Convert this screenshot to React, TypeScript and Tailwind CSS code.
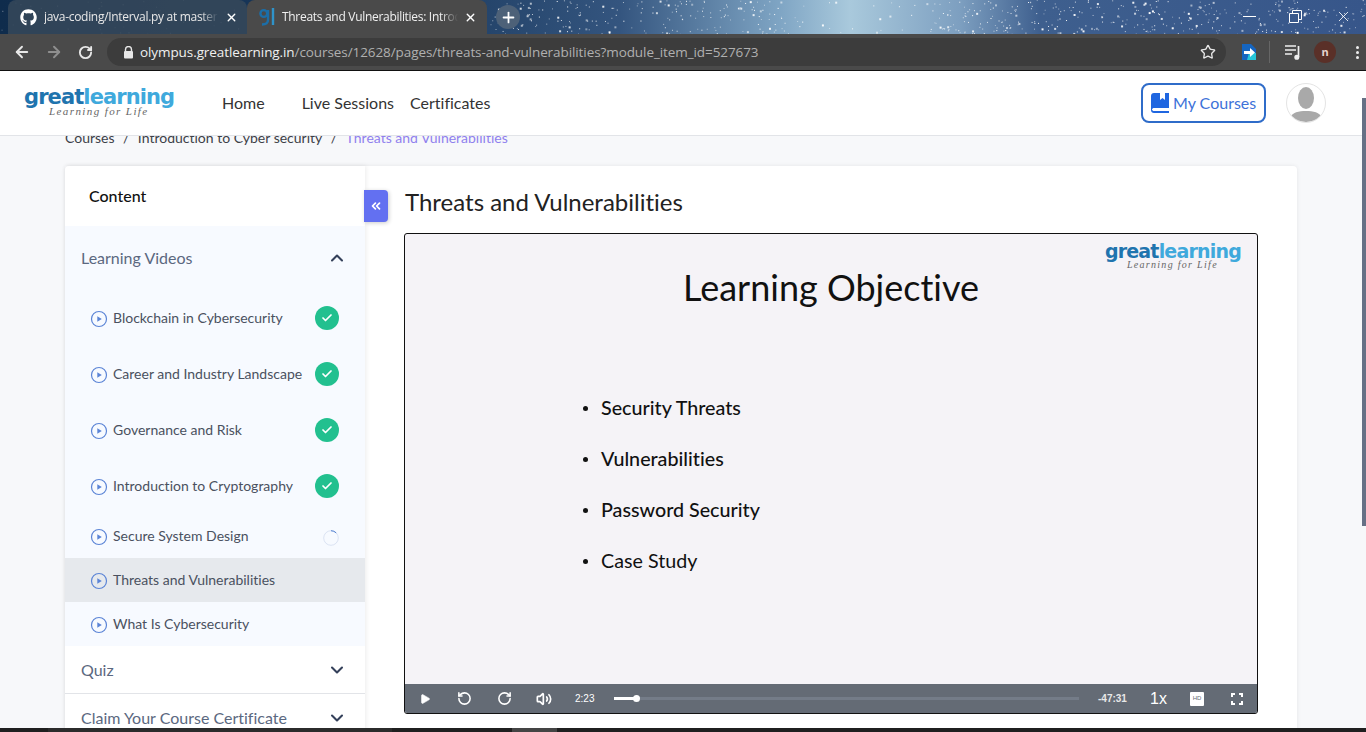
import { ArrowLeft, ArrowRight, ChevronDown, ChevronUp, ChevronsLeft, Check, Play, Plus, RotateCcw, RotateCw, Star, Volume2, X } from 'lucide-react';
import { FaGithub } from 'react-icons/fa';

const lessons = [
  { name: 'Blockchain in Cybersecurity', status: 'done' },
  { name: 'Career and Industry Landscape', status: 'done' },
  { name: 'Governance and Risk', status: 'done' },
  { name: 'Introduction to Cryptography', status: 'done' },
  { name: 'Secure System Design', status: 'progress' },
  { name: 'Threats and Vulnerabilities', status: 'active' },
  { name: 'What Is Cybersecurity', status: 'none' },
];

const bullets = ['Security Threats', 'Vulnerabilities', 'Password Security', 'Case Study'];

// simple seeded random so the star field is the same on each render
function makeStars() {
  const stars: { x: number; y: number; o: number; s: number }[] = [];
  let seed = 1234;
  const next = () => {
    seed = (seed * 16807) % 2147483647;
    return seed / 2147483647;
  };
  for (let i = 0; i < 60; i++) {
    stars.push({ x: next() * 240, y: next() * 34, o: 0.3 + next() * 0.4, s: 1 });
  }
  for (let i = 0; i < 700; i++) {
    const x = 490 + next() * 876;
    if (x > 790 && x < 930 && next() > 0.15) continue;
    stars.push({ x, y: next() * 34, o: 0.4 + next() * 0.6, s: next() > 0.85 ? 2 : 1 });
  }
  return stars;
}

const stars = makeStars();

function GlFavicon() {
  return (
    <svg width="16" height="20" viewBox="0 0 16 20" fill="none" className="shrink-0">
      <circle cx="4.800" cy="6.500" r="3.400" stroke="#1b6ea8" strokeWidth="2.400" />
      <path d="M9 3v10c0 3-2 4.500-6 4.500" stroke="#1b6ea8" strokeWidth="2.400" />
      <path d="M14 1v17" stroke="#2f93c9" strokeWidth="2.400" />
    </svg>
  );
}

function Logo({ small }: { small?: boolean }) {
  return (
    <div className="w-fit flex flex-col leading-none">
      <div className={small ? "font-['DejaVu_Sans'] font-bold text-[19px] tracking-[-0.8px] leading-[17px]" : "font-['DejaVu_Sans'] font-bold text-[21px] tracking-[-0.9px] leading-[18px]"}>
        <span className="text-[#1f74ae]">great</span>
        <span className="text-[#3fa9dc]">learning</span>
      </div>
      <div className={small ? "font-['Liberation_Serif'] italic text-[10px] tracking-[1.3px] text-[#666] pl-[22px]" : "font-['Liberation_Serif'] italic text-[11px] tracking-[1.4px] text-[#666] pl-[25px]"}>
        Learning for Life
      </div>
    </div>
  );
}

function PlayCircle() {
  return (
    <svg width="18" height="18" viewBox="0 0 18 18" fill="none" className="shrink-0 mt-[2px]">
      <circle cx="9" cy="9" r="7.500" stroke="#5b84d6" strokeWidth="1.200" />
      <path d="M7.300 6.200v5.600L11.800 9z" fill="#5b84d6" />
    </svg>
  );
}

function LessonRow({ name, status }: { name: string; status: string }) {
  const done = status === 'done';
  return (
    <div className={`flex items-center pl-[25px] pr-[26px] ${done ? 'h-14' : 'h-11'} ${status === 'active' ? 'bg-[#e6e9ed]' : ''}`}>
      <PlayCircle />
      <span className="ml-[5px] flex-1 text-sm text-[#4a5160] whitespace-nowrap">{name}</span>
      {done && (
        <span className="w-6 h-6 rounded-full bg-[#22c08f] flex items-center justify-center">
          <Check size={12} strokeWidth={3.5} className="text-white" />
        </span>
      )}
      {status === 'progress' && (
        <svg width="16" height="16" viewBox="0 0 16 16" fill="none" className="mt-[3px]">
          <circle cx="8" cy="8" r="7.300" stroke="#dbe3f3" strokeWidth="1" />
          <path d="M8 .7A7.300 7.300 0 0 1 13.200 2.900" stroke="#4f7fd0" strokeWidth="1" />
        </svg>
      )}
    </div>
  );
}

export default function App() {
  return (
    <div className="relative h-[732px] w-[1366px] overflow-hidden flex flex-col bg-[#f7f8fa] font-['Lato',sans-serif] [font-variant-ligatures:none]">
      {/* browser chrome */}
      <div className="relative h-[34px] shrink-0 flex items-end overflow-hidden bg-[linear-gradient(90deg,#0f2c4c_0px,#1b3a5e_400px,#34557f_620px,#7fa5c4_780px,#a9c9dc_850px,#7d9fc0_960px,#3e5f8e_1040px,#37568a_1366px)]">
        <svg className="absolute inset-0" width="1366" height="34">
          {stars.map((s, i) => (
            <rect key={i} x={s.x} y={s.y} width={s.s} height={s.s} fill="#fff" opacity={s.o} />
          ))}
        </svg>
        <div className="relative ml-2 h-[34px] w-[239px] rounded-t-lg bg-[#34475a]/90 flex items-center pl-3 text-[#e8e8e8]">
          <FaGithub size={17} className="text-white shrink-0" />
          <span className="ml-[7px] w-[174px] overflow-hidden whitespace-nowrap text-[12px] tracking-[-0.3px] font-['Open_Sans'] [mask-image:linear-gradient(90deg,#000_90%,transparent)]">java-coding/Interval.py at master</span>
          <X size={13} strokeWidth={2.500} className="ml-[7px] text-white" />
        </div>
        <div className="relative h-[34px] w-[240px] rounded-t-lg bg-[#4a4a4a] flex items-center pl-3 text-[#f0f0f0]">
          <GlFavicon />
          <span className="ml-[7px] w-[176px] overflow-hidden whitespace-nowrap text-[12px] tracking-[-0.3px] font-['Open_Sans'] [mask-image:linear-gradient(90deg,#000_90%,transparent)]">Threats and Vulnerabilities: Introduction</span>
          <X size={13} strokeWidth={2.500} className="ml-[6px] text-white" />
        </div>
        <div className="relative ml-[9px] mb-[5px] w-6 h-6 rounded-full bg-[#4d6178] flex items-center justify-center">
          <Plus size={17} strokeWidth={2.500} className="text-white" />
        </div>
        <div className="relative ml-auto mb-[9px] mr-[14px] flex items-center gap-[33px] text-white">
          <span className="w-[13px] h-px bg-white" />
          <svg width="13" height="13" viewBox="0 0 13 13" fill="none" stroke="#fff">
            <path d="M.5 3.500h9v9h-9zM3.500 3.500v-3h9v9h-3" />
          </svg>
          <X size={17} strokeWidth={1.200} />
        </div>
      </div>

      <div className="h-[37px] shrink-0 bg-[#4a4a4a] border-b border-[#111] flex items-center pl-[13px] text-[#e8e8e8]">
        <ArrowLeft size={18} strokeWidth={2.500} />
        <ArrowRight size={18} strokeWidth={2.500} className="ml-[14px] text-[#8f8f8f]" />
        <RotateCw size={15} strokeWidth={3} className="ml-[15px]" />
        <div className="ml-[14px] h-[28px] w-[1119px] rounded-full bg-[#3c3c3c] flex items-center pl-[16px] pr-[10px]">
          <svg width="11" height="13" viewBox="0 0 11 13" className="shrink-0">
            <path d="M2.500 5V3.500a3 3 0 0 1 6 0V5" fill="none" stroke="#e8e8e8" strokeWidth="1.400" />
            <rect x="1" y="5" width="9" height="7.500" rx="1" fill="#e8e8e8" />
          </svg>
          <span className="ml-[6px] text-[13.5px] tracking-[-0.085px] font-['Open_Sans'] whitespace-nowrap flex-1">
            <span className="text-[#f0f0f0]">olympus.greatlearning.in</span>
            <span className="text-[#b0b0b0]">/courses/12628/pages/threats-and-vulnerabilities?module_item_id=527673</span>
          </span>
          <Star size={16} strokeWidth={2} />
        </div>
        <svg width="16" height="18" viewBox="0 0 16 18" className="ml-[15px]">
          <path d="M1 1h9l5 5v11H1z" fill="#1565c0" />
          <path d="M8 10h7v7H6z" fill="#26c6da" />
          <path d="M3 8h6V5l5 4.500-5 4.500v-3H3z" fill="#fff" />
        </svg>
        <span className="ml-[12px] w-px h-[22px] bg-[#666]" />
        <svg width="18" height="16" viewBox="0 0 18 16" fill="none" stroke="#eee" strokeWidth="1.700" className="ml-[14px]">
          <path d="M1 2h11M1 6h11M1 10h7" />
          <path d="M14.500 2v11" />
          <circle cx="12.800" cy="13.300" r="1.700" fill="#eee" />
        </svg>
        <span className="ml-[12px] w-[22px] h-[22px] rounded-full bg-[#5a3028] flex items-center justify-center text-[11px] font-bold text-[#e8d5d0] font-['Open_Sans']">n</span>
        <span className="ml-[20px] flex flex-col gap-[2px]">
          <span className="w-[3px] h-[3px] rounded-full bg-[#eee]" />
          <span className="w-[3px] h-[3px] rounded-full bg-[#eee]" />
          <span className="w-[3px] h-[3px] rounded-full bg-[#eee]" />
        </span>
      </div>

      {/* site header */}
      <header className="relative z-10 h-[65px] shrink-0 bg-white border-b border-[#e2e4e8] flex items-center pl-6 pr-10">
        <div className="w-[198px] -mt-[2px]">
          <Logo />
        </div>
        <nav className="flex items-center text-base text-[#333]">
          <span>Home</span>
          <span className="ml-[37px]">Live Sessions</span>
          <span className="ml-4">Certificates</span>
        </nav>
        <button className="ml-auto w-[125px] h-10 border-2 border-[#2f6cc9] rounded-lg flex items-center pl-2 text-base text-[#3d72d9]">
          <svg width="18" height="20" viewBox="0 0 18 20" className="shrink-0">
            <path d="M3 0h15v15H3.200C2 15 1 15.600 1 16.500S2 18 3.200 18H18v2H3c-1.800 0-3-1.200-3-3V3c0-1.800 1.200-3 3-3z" fill="#1f66e0" />
            <path d="M9 0h5v7l-2.500-2L9 7z" fill="#fff" />
          </svg>
          <span className="ml-[4px]">My Courses</span>
        </button>
        <div className="ml-5 w-10 h-10 rounded-full border border-[#e4e4e4] overflow-hidden bg-white">
          <svg width="38" height="38" viewBox="0 0 38 38">
            <ellipse cx="19" cy="14" rx="8" ry="11" fill="#a9a9a9" />
            <path d="M3 34c2-6 9-7 16-7s14 1 16 7c-4 3-10 4-16 4S7 37 3 34z" fill="#a9a9a9" />
          </svg>
        </div>
      </header>

      {/* page */}
      <div className="flex-1 min-h-0 relative pl-[65px] pr-[69px]">
        <div className="-mt-[7px] h-[17px] flex items-center text-sm leading-[17px] text-[#3c4047] whitespace-nowrap">
          <span>Courses</span>
          <span className="mx-[8.500px]">/</span>
          <span>Introduction to Cyber security</span>
          <span className="mx-[8.500px]">/</span>
          <span className="text-[#8f80ee]">Threats and Vulnerabilities</span>
        </div>
        <div className="mt-5 h-[600px] bg-white rounded-t flex shadow-[0_0_4px_rgba(0,0,0,0.08)]">
          <aside className="relative w-[300px] shrink-0 shadow-[1px_0_5px_rgba(0,0,0,0.08)]">
            <div className="h-[60px] flex items-center pl-6 text-base font-medium text-[#111]">Content</div>
            <div className="bg-[#f7faff]">
              <div className="h-[65px] flex items-center justify-between pl-4 pr-[18px] pb-[2px] text-base text-[#5b6880]">
                <span>Learning Videos</span>
                <ChevronUp size={20} strokeWidth={2.500} className="text-[#34405a]" />
              </div>
              <div className="-mt-px">
                {lessons.map((l) => (
                  <LessonRow key={l.name} name={l.name} status={l.status} />
                ))}
              </div>
            </div>
            <div className="h-12 border-b border-[#e2e4e8] flex items-center justify-between pl-4 pr-[18px] text-base text-[#5b6880]">
              <span>Quiz</span>
              <ChevronDown size={20} strokeWidth={2.500} className="text-[#34405a]" />
            </div>
            <div className="h-12 flex items-center justify-between pl-4 pr-[18px] text-base text-[#5b6880]">
              <span>Claim Your Course Certificate</span>
              <ChevronDown size={20} strokeWidth={2.500} className="text-[#34405a]" />
            </div>
            <div className="absolute left-[299px] top-6 w-6 h-8 bg-[#6370f1] rounded-r flex items-center justify-center shadow-[1px_1px_4px_rgba(0,0,0,0.2)]">
              <ChevronsLeft size={14} strokeWidth={3} className="text-white" />
            </div>
          </aside>

          <main className="flex-1 pl-[39px] pr-[39px] pt-[19px]">
            <h1 className="h-[34px] text-2xl leading-[34px] text-[#222] pl-px">Threats and Vulnerabilities</h1>
            <div className="relative mt-[14px] h-[481px] rounded-[3px] border border-[#111] overflow-hidden flex flex-col bg-[#f5f3f7]">
              <div className="absolute right-[16px] top-[9px]">
                <Logo small />
              </div>
              <div className="flex-1 min-h-0">
                <div className="pt-[28px] text-center text-[36px] leading-[50px] text-[#111]">Learning Objective</div>
                <ul className="mt-[81px] pl-[177px] flex flex-col gap-[21px]">
                  {bullets.map((b, i) => (
                    <li key={b} className={`flex items-center h-[30px] text-[19.700px] text-[#111] ${i < 3 ? 'font-medium' : ''}`}>
                      <span className="ml-px w-[5px] h-[5px] rounded-full bg-[#111] mr-[13px]" />
                      {b}
                    </li>
                  ))}
                </ul>
              </div>
              <div className="h-[29px] shrink-0 bg-[#646b75] flex items-center pl-[14px] text-white font-['Liberation_Sans']">
                <Play size={12} fill="currentColor" strokeWidth={1} />
                <RotateCcw size={15} strokeWidth={2.500} className="ml-[26px]" />
                <RotateCw size={15} strokeWidth={2.500} className="ml-[25px]" />
                <Volume2 size={16} strokeWidth={2.500} className="ml-[24px]" />
                <span className="ml-[23px] text-[10px] w-[20px]">2:23</span>
                <div className="ml-[19px] w-[465px] h-[3px] bg-[#747c88] relative">
                  <div className="w-[22px] h-[3px] bg-white" />
                  <span className="absolute left-[19px] -top-[2px] w-[7px] h-[7px] rounded-full bg-white" />
                </div>
                <span className="ml-[19px] text-[10px] w-[29px] font-bold text-[#e8e8e8]">-47:31</span>
                <span className="ml-[23px] text-[16px] w-[16px]">1x</span>
                <span className="ml-[24px] w-[14px] h-[14px] bg-white rounded-[1px] text-[6px] text-[#646b75] flex items-center justify-center">HD</span>
                <svg width="12" height="12" viewBox="0 0 12 12" fill="none" stroke="#fff" strokeWidth="2" className="ml-[27px]">
                  <path d="M1 4V1h3M8 1h3v3M11 8v3H8M4 11H1V8" />
                </svg>
              </div>
            </div>
          </main>
        </div>
      </div>

      {/* bottom edge of the taskbar */}
      <div className="absolute left-0 right-0 bottom-0 z-20 h-1 flex bg-[#1f1f1f]">
        <span className="ml-12 w-[344px] bg-[#2b2b2b]" />
        <span className="ml-[120px] w-[45px] bg-[#444]" />
      </div>
      <div className="absolute right-0 top-[98px] z-20 h-[428px] w-1 bg-[#667085]" />
    </div>
  );
}
